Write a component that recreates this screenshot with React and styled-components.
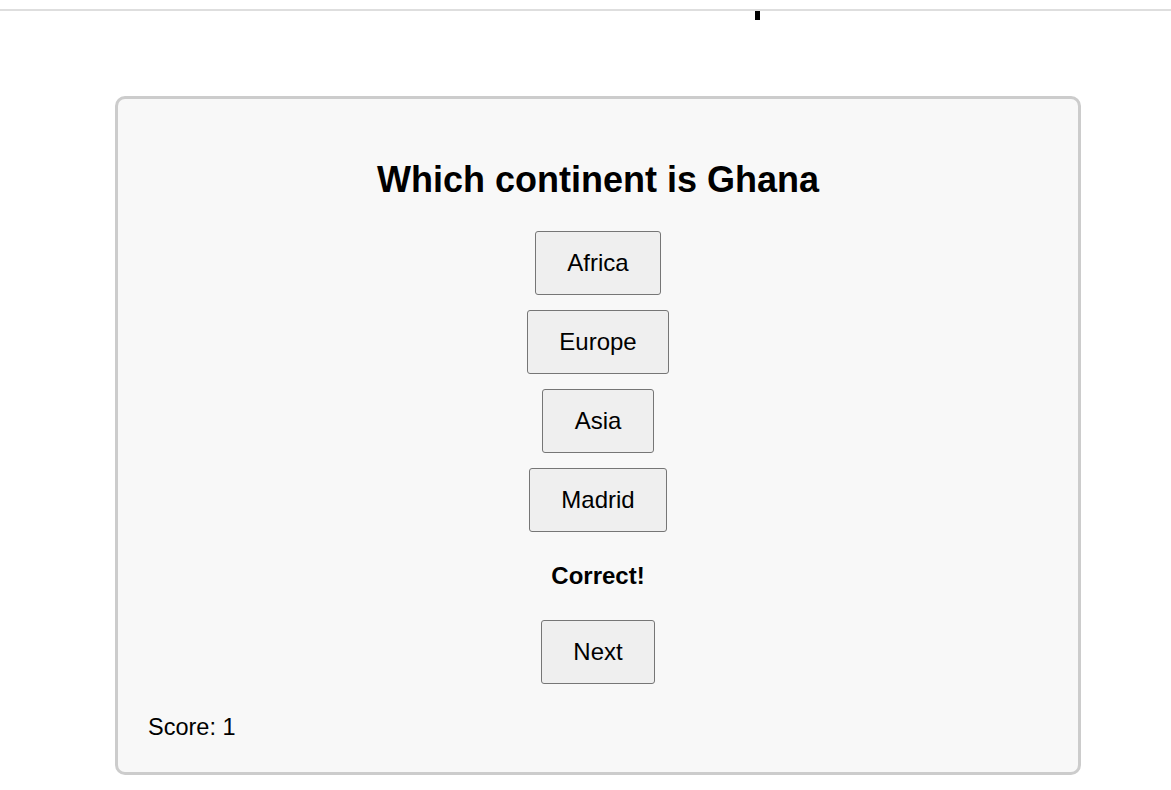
import React from "react";
import styled, { createGlobalStyle } from "styled-components";

const GlobalStyle = createGlobalStyle`
  html, body {
    margin: 0;
    padding: 0;
    background: #ffffff;
    font-family: "Liberation Sans", Arial, sans-serif;
    color: #000;
  }
`;

const Page = styled.div`
  width: 1171px;
  min-height: 790px;
  padding-top: 9px;
  box-sizing: border-box;
`;

const TopRule = styled.div`
  height: 2px;
  background: #dedede;
`;

const TickRow = styled.div`
  display: flex;
  padding-left: 755px;
  height: 9px;
`;

const Tick = styled.span`
  width: 5px;
  height: 9px;
  background: #000;
`;

const Stage = styled.main`
  display: flex;
  padding: 76px 0 0 115px;
`;

const Card = styled.section`
  width: 966px;
  height: 679px;
  box-sizing: border-box;
  border: 3px solid #cccccc;
  border-radius: 10px;
  background: #f8f8f8;
  display: flex;
  flex-direction: column;
  align-items: center;
  padding: 60px 30px 0 30px;
`;

const Question = styled.h1`
  margin: 0;
  font-size: 36px;
  font-weight: bold;
  line-height: 41px;
  text-align: center;
`;

const Options = styled.div`
  display: flex;
  flex-direction: column;
  align-items: center;
  gap: 15px;
  margin-top: 31px;
`;

const Button = styled.button`
  font-family: "Liberation Sans", Arial, sans-serif;
  font-size: 24px;
  line-height: 28px;
  height: 64px;
  padding: 0 31.5px;
  color: #000;
  background: #efefef;
  border: 1px solid #767676;
  border-radius: 3px;
  cursor: pointer;
  margin-top: ${(p) => p.$top || 0}px;
`;

const Feedback = styled.p`
  margin: 30px 0 0 0;
  font-size: 24px;
  font-weight: bold;
  line-height: 28px;
`;

const Score = styled.p`
  align-self: flex-start;
  margin: 30px 0 0 0;
  font-size: 23.5px;
  line-height: 27px;
`;

const options = ["Africa", "Europe", "Asia", "Madrid"];

export default function App() {
  return (
    <>
      <GlobalStyle />
      <Page>
        <TopRule />
        <TickRow>
          <Tick />
        </TickRow>
        <Stage>
          <Card>
            <Question>Which continent is Ghana</Question>
            <Options>
              {options.map((o) => (
                <Button key={o}>{o}</Button>
              ))}
            </Options>
            <Feedback>Correct!</Feedback>
            <Button $top={30}>Next</Button>
            <Score>Score: 1</Score>
          </Card>
        </Stage>
      </Page>
    </>
  );
}
